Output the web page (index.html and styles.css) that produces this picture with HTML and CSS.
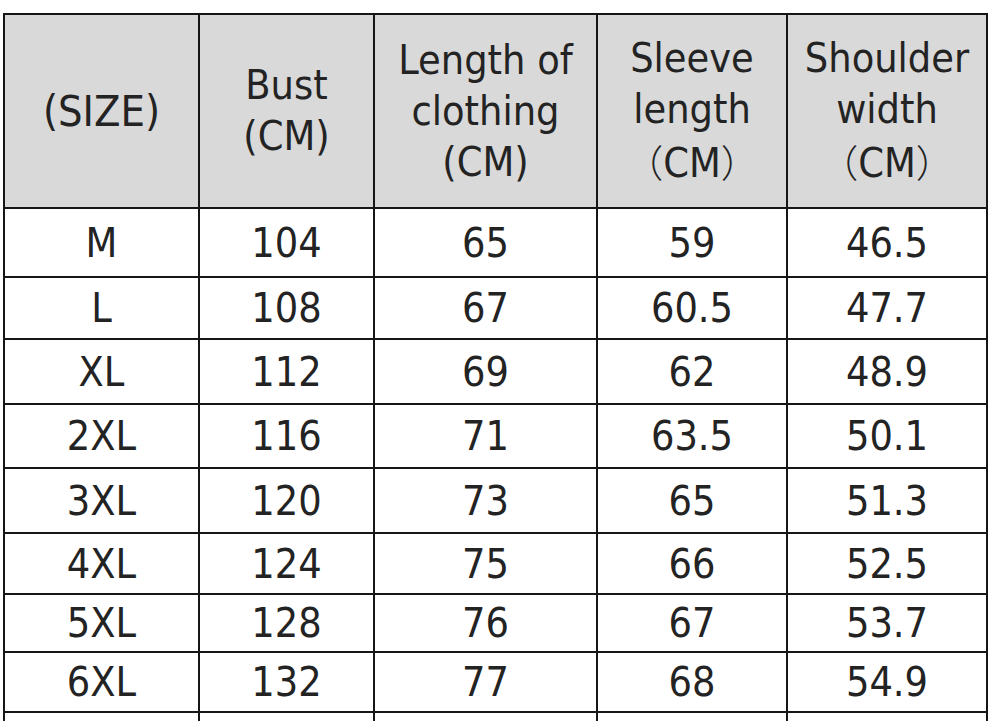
FILE: index.html
```html
<!DOCTYPE html>
<html lang="en">
<head>
<meta charset="utf-8">
<title>Size chart</title>
<link rel="stylesheet" href="styles.css">
</head>
<body>
<div class="sheet">
<table class="size-table">
  <colgroup>
    <col class="c1"><col class="c2"><col class="c3"><col class="c4"><col class="c5">
  </colgroup>
  <thead>
    <tr>
      <th class="size-head">(SIZE)</th>
      <th>Bust<br>(CM)</th>
      <th>Length of<br>clothing<br>(CM)</th>
      <th>Sleeve<br>length<br><span class="fw">（</span>CM<span class="fw">）</span></th>
      <th>Shoulder<br>width<br><span class="fw">（</span>CM<span class="fw">）</span></th>
    </tr>
  </thead>
  <tbody>
    <tr><td>M</td><td>104</td><td>65</td><td>59</td><td>46.5</td></tr>
    <tr><td>L</td><td>108</td><td>67</td><td>60.5</td><td>47.7</td></tr>
    <tr><td>XL</td><td>112</td><td>69</td><td>62</td><td>48.9</td></tr>
    <tr><td>2XL</td><td>116</td><td>71</td><td>63.5</td><td>50.1</td></tr>
    <tr><td>3XL</td><td>120</td><td>73</td><td>65</td><td>51.3</td></tr>
    <tr><td>4XL</td><td>124</td><td>75</td><td>66</td><td>52.5</td></tr>
    <tr><td>5XL</td><td>128</td><td>76</td><td>67</td><td>53.7</td></tr>
    <tr><td>6XL</td><td>132</td><td>77</td><td>68</td><td>54.9</td></tr>
    <tr class="stub"><td></td><td></td><td></td><td></td><td></td></tr>
  </tbody>
</table>
</div>
</body>
</html>
```
FILE: styles.css
```css
html, body {
  margin: 0;
  padding: 0;
  background: #ffffff;
  overflow: hidden;
}

.sheet {
  padding: 13px 0 0 3px;
}

.size-table {
  border-collapse: collapse;
  table-layout: fixed;
  width: 983px;
  font-family: "DejaVu Sans Condensed", "DejaVu Sans", "Noto Sans CJK SC", sans-serif;
  font-stretch: condensed;
  color: #232323;
}

.c1 { width: 195px; }
.c2 { width: 175px; }
.c3 { width: 223px; }
.c4 { width: 190px; }
.c5 { width: 200px; }

.size-table th,
.size-table td {
  border: 2px solid #161616;
  padding: 0;
  text-align: center;
  vertical-align: middle;
}

.size-table th {
  background: #d9d9d9;
  font-weight: normal;
  font-size: 41px;
  line-height: 51px;
}

.size-table th.size-head {
  font-size: 43px;
}

.fw {
  font-family: "Noto Sans CJK SC", sans-serif;
  font-weight: 300;
  font-size: 38px;
}

.size-table td {
  font-size: 41px;
  line-height: 48px;
}

.size-table thead tr { height: 194px; }
.size-table tbody tr:nth-child(1) { height: 69px; }
.size-table tbody tr:nth-child(2) { height: 62px; }
.size-table tbody tr:nth-child(3) { height: 65px; }
.size-table tbody tr:nth-child(4) { height: 64px; }
.size-table tbody tr:nth-child(5) { height: 65px; }
.size-table tbody tr:nth-child(6) { height: 61px; }
.size-table tbody tr:nth-child(7) { height: 58px; }
.size-table tbody tr:nth-child(8) { height: 60px; }

.size-table tr.stub { height: 40px; }
.size-table tr.stub td { border-bottom: none; }
```
